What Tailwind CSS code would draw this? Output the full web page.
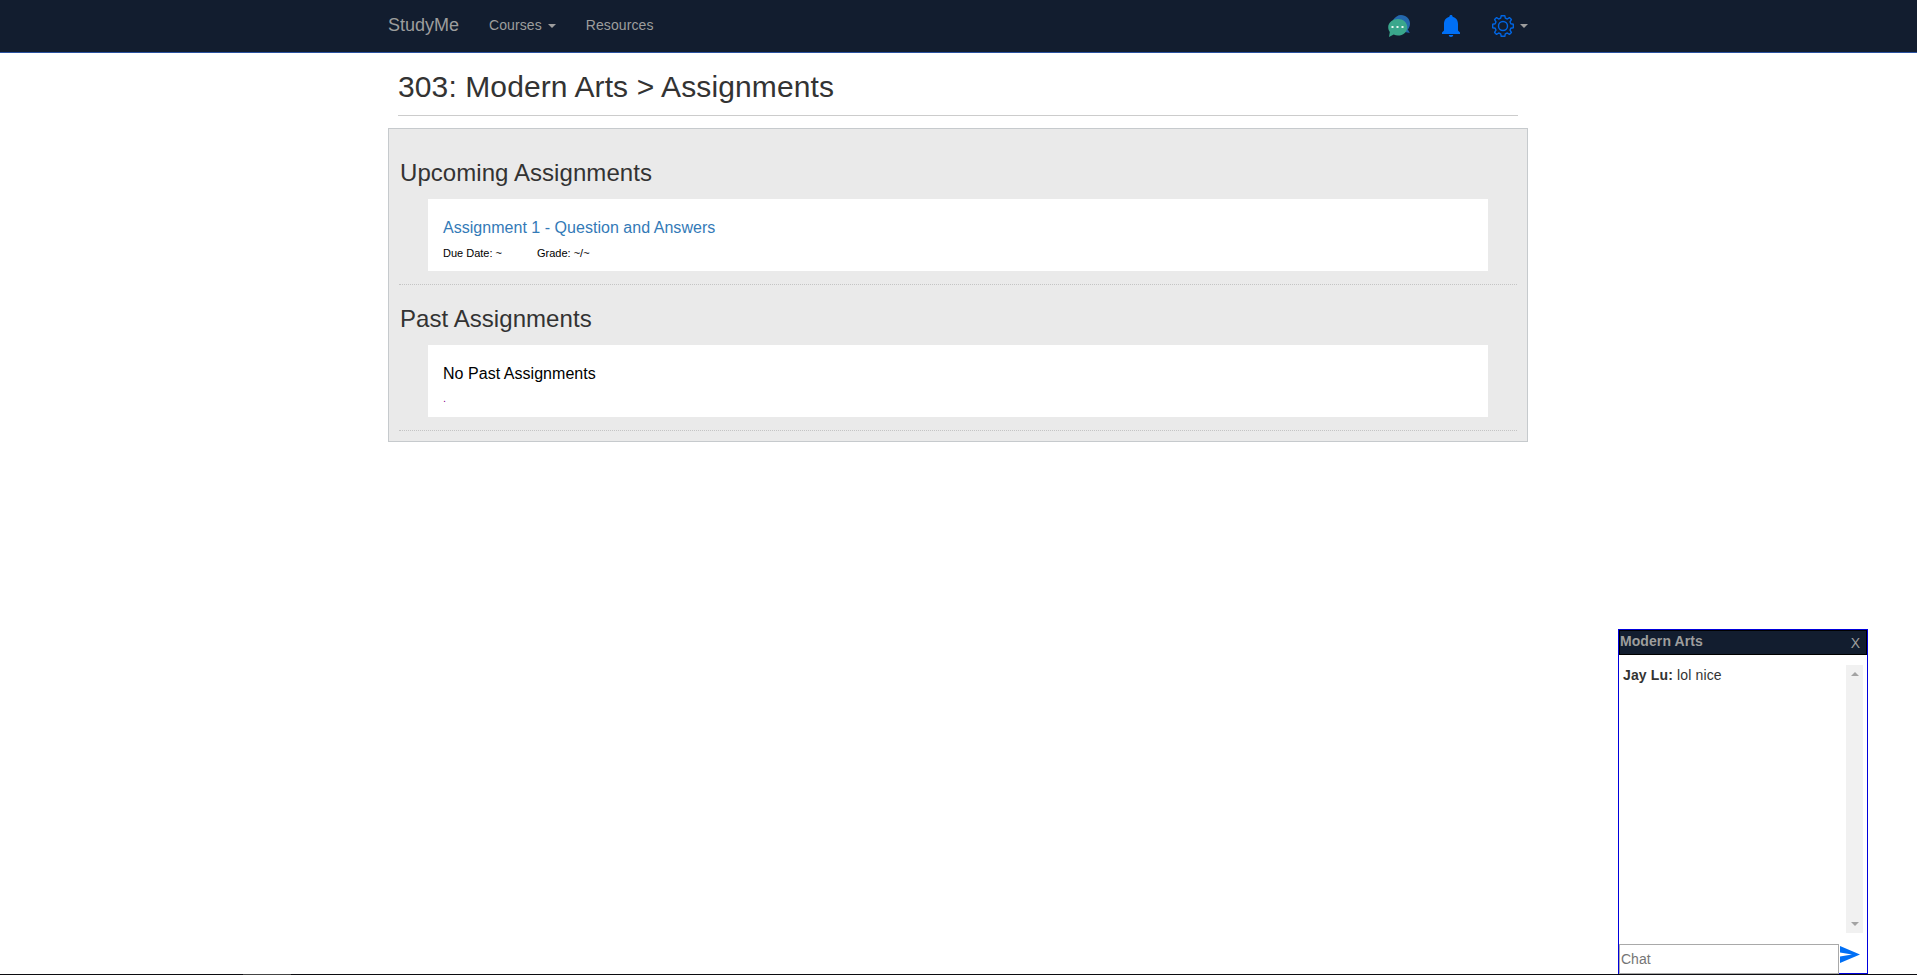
<!DOCTYPE html>
<html lang="en">
<head>
<meta charset="utf-8">
<title>StudyMe</title>
<script src="https://cdn.jsdelivr.net/npm/@tailwindcss/browser@4"></script>
</head>
<body class="relative h-screen overflow-hidden bg-white font-['Liberation_Sans',Arial,sans-serif] text-sm leading-5 text-[#333]">
<nav class="h-[53px] border-b border-[#2a52a0] bg-[#121d2f] text-[#9d9d9d]">
  <div class="ml-[388px] flex h-[50px] w-[1140px] items-center">
    <a class="text-lg leading-5">StudyMe</a>
    <a class="ml-[30px] flex items-center tracking-[0.08px]">Courses<span class="ml-[6px] mt-[2px] border-x-4 border-t-4 border-x-transparent border-t-[#9d9d9d]"></span></a>
    <a class="ml-[30px] tracking-[0.1px]">Resources</a>
    <div class="ml-auto mt-[2px] flex items-center">
      <svg class="h-[22px] w-[22px]" viewBox="0 0 22 22"><path d="M13 0c5 0 9 3.700 9 8.500 0 2.300-.8 4.500-2.200 6l2 3.500-5-1L5 5C7 2 10 0 13 0z" fill="#2468ad"/><path d="M10 4c5 0 9.300 3.500 9.300 8.200S15 20.500 10 20.500c-1.500 0-3-.3-4.300-.9L1 22l.8-5C.7 15.600.2 14 .2 12.300.200 7.500 5 4 10 4z" fill="#3aa78c"/><path d="M3.500 11h2v2h-2zM8.500 11h2v2h-2zM13.500 11h2v2h-2z" fill="#e8f5f0"/></svg>
      <svg class="ml-[32px] h-[22px] w-[18px]" viewBox="0 0 18 22"><path d="M9 0c1 0 1.600.7 1.600 1.700C14 2.500 16 5.400 16 9v6.500l2 2V19H0v-1.500l2-2V9c0-3.600 2-6.500 5.400-7.300C7.400.7 8 0 9 0zM6.800 20h4.400c0 1.200-.9 2-2.200 2s-2.200-.8-2.200-2z" fill="#006ff5"/></svg>
      <svg class="ml-[32px] h-[22px] w-[22px]" viewBox="0 0 22 22" fill="none" stroke="#0065e2" stroke-width="1.400" stroke-linejoin="round"><circle cx="11" cy="11" r="4.500"/><path d="M9.200.7h3.600l.5 2.500 2 .8 2.100-1.400 2 2L18 6.800l.8 1.900 2.500.5v3.600l-2.500.5-.8 1.900 1.400 2.200-2 2-2.100-1.400-2 .8-.5 2.500H9.200l-.5-2.500-2-.8-2.100 1.400-2-2L4 15.200l-.8-1.900-2.500-.5V9.200l2.500-.5.8-1.900-1.400-2.200 2-2L6.700 4l2-.8z"/></svg>
      <span class="ml-[6px] border-x-4 border-t-4 border-x-transparent border-t-[#9d9d9d]"></span>
    </div>
  </div>
</nav>
<main class="ml-[388px] w-[1140px]">
  <h1 class="ml-[10px] mr-[10px] h-[63px] border-b border-[#ccc] pt-[17px] text-[30px] leading-[33px] tracking-[0.11px]">303: Modern Arts &gt; Assignments</h1>
  <div class="mt-3 h-[314px] border border-[#c6cacd] bg-[#eaeaea] px-[10px]">
    <section class="h-[156px] border-b border-dotted border-[#c4c4c4] pt-[31px]">
      <h2 class="h-[39px] pl-px text-2xl leading-[26px] tracking-[0.06px]">Upcoming Assignments</h2>
      <div class="mx-[29px] h-[72px] bg-white px-[15px] pt-[19px] text-black">
        <p class="text-base leading-5 tracking-[0.03px] text-[#337ab7]">Assignment 1 - Question and Answers</p>
        <p class="mt-[9px] flex gap-[35px] text-[11px] leading-3"><span>Due Date: ~</span><span>Grade: ~/~</span></p>
      </div>
    </section>
    <section class="h-[146px] border-b border-dotted border-[#c4c4c4] pt-[21px]">
      <h2 class="h-[39px] pl-px text-2xl leading-[26px] tracking-[0.06px]">Past Assignments</h2>
      <div class="mx-[29px] h-[72px] bg-white px-[15px] pt-[19px] text-black">
        <p class="text-base leading-5 tracking-[0.04px]">No Past Assignments</p>
        <p class="mt-2 text-[11px] leading-3 text-[#8b008b]">.</p>
      </div>
    </section>
  </div>
</main>
<aside class="absolute left-[1618px] top-[629px] flex h-[345px] w-[250px] flex-col border border-[#0000dd] bg-white">
  <header class="flex h-[25px] shrink-0 justify-between border border-black bg-[#121d2f] pr-[6px] text-[#9d9d9d]"><b class="leading-5 tracking-[0.08px]">Modern Arts</b><span class="mt-[2px] leading-5">X</span></header>
  <div class="mx-1 mt-[10px] flex h-[268px] shrink-0 justify-between">
    <p class="tracking-[0.14px]"><b>Jay Lu:</b> lol nice</p>
    <div class="flex w-[17px] flex-col items-center justify-between bg-[#f1f1f1] py-[7px]"><span class="border-x-4 border-b-4 border-x-transparent border-b-[#a3a3a3]"></span><span class="border-x-4 border-t-4 border-x-transparent border-t-[#a3a3a3]"></span></div>
  </div>
  <div class="mt-[11px] flex h-[30px] shrink-0"><div class="w-[220px] border border-[#a9a9a9] bg-white pl-px pt-1 text-[#757575]">Chat</div>
    <svg class="ml-px mt-[2px] h-[17px] w-[20px]" viewBox="0 0 20 17"><path d="M0 0l20 8.500L0 17v-6.500l12-2L0 6.500z" fill="#006ff5"/></svg></div>
</aside>
<div class="absolute bottom-0 left-0 h-px w-full bg-[#0c0c10] pl-[243px]"><div class="h-px w-[48px] bg-[#444]"></div></div>
</body>
</html>
